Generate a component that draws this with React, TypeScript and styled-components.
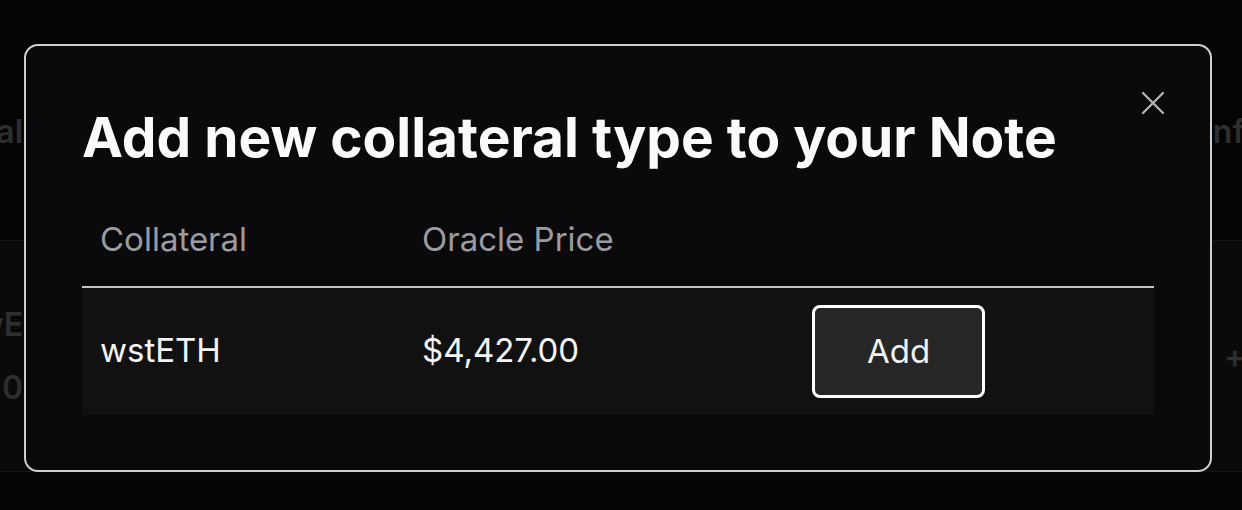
import styled, { createGlobalStyle } from "styled-components"

const GlobalStyle = createGlobalStyle`
    html, body {
        margin: 0;
        padding: 0;
        background: #040404;
        overflow: hidden;
    }
    body {
        font-family: Inter, "Noto Sans", "Liberation Sans", sans-serif;
    }
`

const Page = styled.div`
    position: relative;
    width: 1242px;
    height: 510px;
    overflow: hidden;
    background: #040404;
`

const BackTable = styled.div`
    color: #2e2e30;
    font-size: 32px;
`

const BackRow = styled.div<{ $body?: boolean }>`
    display: grid;
    grid-template-columns: 23px 1fr 40px;
    align-items: center;
    height: ${p => (p.$body ? "231px" : "241px")};
    padding-top: ${p => (p.$body ? "0" : "22px")};
    background: ${p => (p.$body ? "#0a0a0b" : "transparent")};
    border-bottom: 1px solid #161617;
    box-sizing: border-box;
`

const BackLeft = styled.div`
    display: flex;
    flex-direction: column;
    align-items: flex-end;
    gap: 24px;
    white-space: nowrap;
    font-weight: 600;
`

const BackRight = styled.div<{ $inset: number }>`
    white-space: nowrap;
    grid-column: 3;
    padding-left: ${p => p.$inset}px;
    font-weight: 600;
`

const Overlay = styled.div`
    position: absolute;
    inset: 0;
    padding: 44px 0 0 24px;
`

const Modal = styled.div`
    position: relative;
    width: 1188px;
    box-sizing: border-box;
    background: #0a0a0c;
    border: 2px solid #cfcfd1;
    border-radius: 14px;
    padding: 58px 56px 55px;
`

const Close = styled.button`
    position: absolute;
    top: 44px;
    right: 44px;
    width: 26px;
    height: 26px;
    padding: 0;
    border: none;
    background: transparent;
    color: #b8b8ba;
    display: flex;
    align-items: center;
    justify-content: center;
    cursor: pointer;
`

const Title = styled.h2`
    margin: 0 0 50px;
    color: #fafafa;
    font-size: 55px;
    font-weight: 700;
    line-height: 1.2;
`

const Table = styled.div`
    display: flex;
    flex-direction: column;
`

const Row = styled.div<{ $head?: boolean }>`
    display: grid;
    grid-template-columns: 322px 390px 1fr;
    align-items: center;
    padding: ${p => (p.$head ? "0 18px 26px" : "17px 18px")};
    background: ${p => (p.$head ? "transparent" : "#111112")};
    border-bottom: ${p => (p.$head ? "2px solid #c4c4c6" : "none")};
    color: ${p => (p.$head ? "#9b9ba0" : "#f4f4f5")};
    font-size: 33px;
    line-height: 1.2;
`

const AddButton = styled.button`
    width: 173px;
    height: 93px;
    box-sizing: border-box;
    border: 3px solid #ffffff;
    border-radius: 8px;
    background: #272727;
    color: #f2f2f2;
    font-family: inherit;
    font-size: 33px;
    cursor: pointer;
`

const rows = [{ name: "wstETH", price: "$4,427.00" }]

export default function App() {
    return (
        <Page>
            <GlobalStyle />
            <BackTable>
                <BackRow>
                    <BackLeft>Total Collateral</BackLeft>
                    <BackRight $inset={2}>Info</BackRight>
                </BackRow>
                <BackRow $body>
                    <BackLeft>
                        <span>wstwE</span>
                        <span>0</span>
                    </BackLeft>
                    <BackRight $inset={22}>+</BackRight>
                </BackRow>
            </BackTable>
            <Overlay>
                <Modal>
                    <Close aria-label="Close">
                        <svg width="24" height="24" viewBox="0 0 24 24" fill="none" stroke="currentColor" strokeWidth="2.2" strokeLinecap="round">
                            <path d="M2 2 L22 22 M22 2 L2 22" />
                        </svg>
                    </Close>
                    <Title>Add new collateral type to your Note</Title>
                    <Table>
                        <Row $head>
                            <span>Collateral</span>
                            <span>Oracle Price</span>
                            <span />
                        </Row>
                        {rows.map(r => (
                            <Row key={r.name}>
                                <span>{r.name}</span>
                                <span>{r.price}</span>
                                <div>
                                    <AddButton>Add</AddButton>
                                </div>
                            </Row>
                        ))}
                    </Table>
                </Modal>
            </Overlay>
        </Page>
    )
}
